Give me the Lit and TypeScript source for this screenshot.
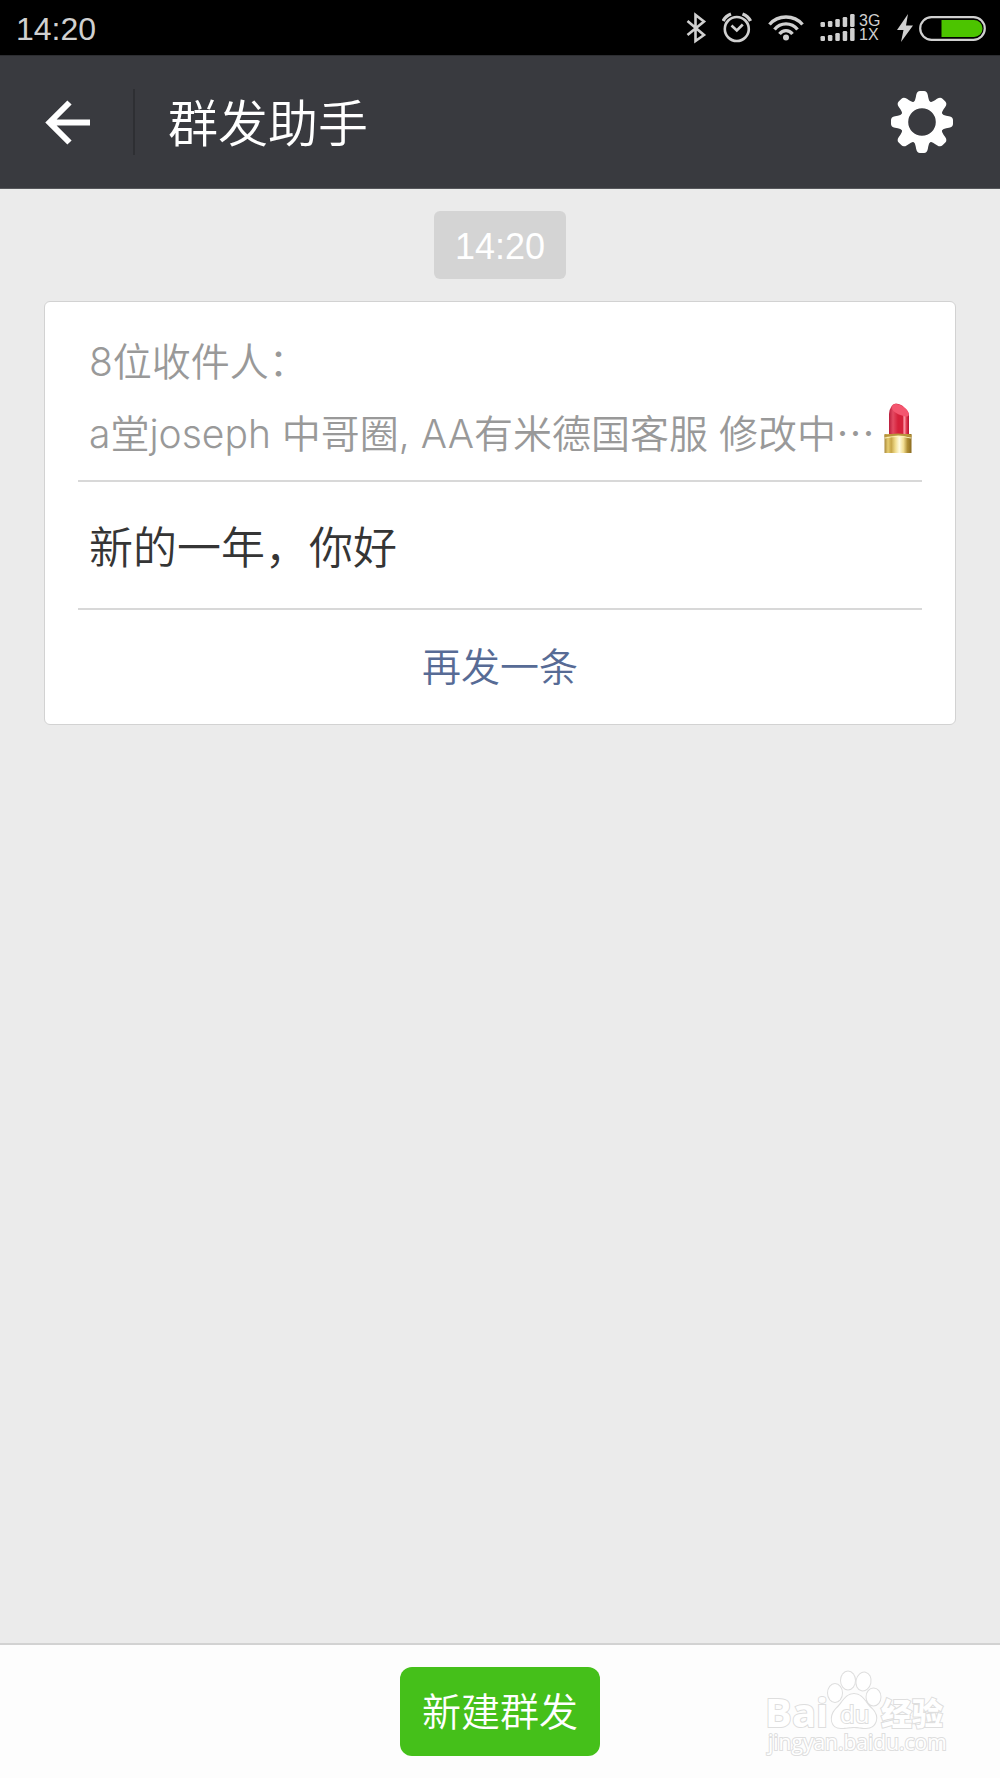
import { LitElement, html, css, svg } from "lit";
import { customElement, property } from "lit/decorators.js";

const sans = css`"Liberation Sans", "Noto Sans CJK SC", sans-serif`;
const mixed = css`Inter, "Noto Sans CJK SC", sans-serif`;

@customElement("status-bar")
class StatusBar extends LitElement {
  @property() time = "";

  static styles = css`
    :host {
      display: flex;
      align-items: center;
      justify-content: space-between;
      height: 55px;
      padding: 0 13px 0 16px;
      background: #000;
      color: #d0d0d0;
      font-family: ${sans};
    }
    .time {
      font-size: 32px;
      line-height: 36px;
      padding-top: 2px;
    }
    .icons,
    .cell,
    .power {
      display: flex;
      align-items: center;
    }
    .icons {
      gap: 14px;
    }
    .cell {
      gap: 3px;
    }
    .power {
      gap: 4px;
    }
    .network {
      display: flex;
      flex-direction: column;
      min-width: 23px;
      font-size: 16px;
      line-height: 14px;
    }
    svg {
      display: block;
      flex: none;
    }
  `;

  render() {
    const bars = [5, 6, 8, 10, 13];
    return html`
      <span class="time">${this.time}</span>
      <div class="icons">
        <svg width="22" height="32" viewBox="0 0 22 32" fill="none" stroke="#d0d0d0" stroke-width="2.6" aria-label="Bluetooth">
          <path d="M1.500 9 L18 23 L9.500 29 V3 L18 9.500 L1.500 23" />
        </svg>
        <svg width="31" height="32" viewBox="0 0 31 32" fill="none" stroke="#d0d0d0" stroke-width="2.6" aria-label="Alarm">
          <circle cx="14.800" cy="17" r="12" />
          <path d="M9.500 13.500 L14.800 18.500 L20.800 12.500" />
          <path d="M1.200 9 Q3.500 4 9 2 M28.500 9 Q26 4 20.500 2" stroke-width="3.4" />
        </svg>
        <svg width="38" height="32" viewBox="0 0 38 32" fill="none" stroke="#d0d0d0" stroke-width="3.4" aria-label="Wi-Fi">
          <path d="M2.500 12.500 C11 2.500 27 2.500 35.500 12.500" />
          <path d="M7.500 17.500 C13.500 10 24.500 10 30.500 17.500" />
          <path d="M12.500 22 C16 17.500 22 17.500 25.500 22" />
          <circle cx="19" cy="25.500" r="3" fill="#d0d0d0" stroke="none" />
        </svg>
        <div class="cell">
          <svg width="37" height="32" viewBox="0 0 37 32" fill="#d0d0d0" aria-label="Signal">
            ${[15, 29].map((base) =>
              bars.map(
                (h, i) => svg`<rect x=${1.5 + i * 7.4} y=${base - h} width="4.500" height=${h} rx="1.300" />`
              )
            )}
          </svg>
          <div class="network"><span>3G</span><span>1X</span></div>
        </div>
        <div class="power">
          <svg width="18" height="32" viewBox="0 0 18 32" fill="#d0d0d0" aria-label="Charging">
            <path d="M12 2 L1 18 H7.500 L5 30 L17 13.500 H10 Z" />
          </svg>
          <svg width="69" height="32" viewBox="0 0 69 32" aria-label="Battery">
            <rect x="2.200" y="5.200" width="64.600" height="22.600" rx="11.300" fill="none" stroke="#d0d0d0" stroke-width="2.200" />
            <path d="M23.500 8 H56 A8.500 8.500 0 0 1 56 25 H23.500 Z" fill="#4cc400" />
          </svg>
        </div>
      </div>
    `;
  }
}

@customElement("title-bar")
class TitleBar extends LitElement {
  @property() heading = "";

  static styles = css`
    :host {
      display: flex;
      align-items: center;
      height: 134px;
      padding: 0 40px 0 38px;
      box-sizing: border-box;
      background: #393a3f;
      border-bottom: 1px solid #56575b;
      border-top: 1px solid #2c2d31;
      color: #fff;
      font-family: ${sans};
    }
    button {
      display: block;
      padding: 0;
      border: 0;
      background: none;
      color: inherit;
      cursor: pointer;
    }
    svg {
      display: block;
    }
    .divider {
      width: 2px;
      height: 66px;
      margin: 0 33px 0 37px;
      background: #2e2f33;
    }
    h1 {
      flex: 1;
      margin: 0;
      padding-top: 5px;
      font-size: 50px;
      line-height: 60px;
      font-weight: 350;
    }
  `;

  render() {
    return html`
      <button aria-label="返回">
        <svg width="58" height="52" viewBox="0 0 58 52" fill="none" stroke="currentColor" stroke-width="6">
          <path d="M52 26.500 H11 M31.500 6.500 L11.500 26.500 L31.500 46.500" />
        </svg>
      </button>
      <div class="divider"></div>
      <h1>${this.heading}</h1>
      <button aria-label="设置">
        <svg width="76" height="76" viewBox="-38 -38 76 76">
          <circle r="17.800" fill="none" stroke="currentColor" stroke-width="8" />
          ${[0, 45, 90, 135, 180, 225, 270, 315].map(
            (a) => svg`<path transform="rotate(${a})" fill="currentColor"
              d="M-10 -18 C-7 -20 -6.500 -23 -5.800 -27 Q-5 -31 -2 -31 H2 Q5 -31 5.800 -27 C6.500 -23 7 -20 10 -18 Z" />`
          )}
        </svg>
      </button>
    `;
  }
}

@customElement("lipstick-icon")
class LipstickIcon extends LitElement {
  static styles = css`
    :host {
      display: block;
      flex: none;
    }
    svg {
      display: block;
    }
  `;

  render() {
    return html`
      <svg width="28" height="50" viewBox="0 0 28 50" role="img" aria-label="💄">
        <defs>
          <linearGradient id="gold">
            <stop offset="0" stop-color="#a8883a" />
            <stop offset="0.130" stop-color="#e6cd72" />
            <stop offset="0.250" stop-color="#c6a548" />
            <stop offset="0.400" stop-color="#f0dc8c" />
            <stop offset="0.550" stop-color="#fffbe0" />
            <stop offset="0.700" stop-color="#f3df94" />
            <stop offset="0.850" stop-color="#b08f35" />
            <stop offset="1" stop-color="#8b6b20" />
          </linearGradient>
          <linearGradient id="red">
            <stop offset="0" stop-color="#b91d3c" />
            <stop offset="0.200" stop-color="#e34a62" />
            <stop offset="0.450" stop-color="#d5203a" />
            <stop offset="0.680" stop-color="#d5203a" />
            <stop offset="0.760" stop-color="#ff9cab" />
            <stop offset="0.880" stop-color="#e0354e" />
            <stop offset="1" stop-color="#b3122f" />
          </linearGradient>
        </defs>
        <path d="M5 32 V11 Q6 1 12 0.500 C18 1 25 7 25 13 V32 Z" fill="url(#red)" />
        <path d="M8.500 3 C11 -1 18 2 22 6 C26 10 26 14 21 13.500 C14 12 6 8 8.500 3 Z" fill="#f4566f" />
        <rect x="0.500" y="31" width="27" height="19" fill="url(#gold)" />
        <path d="M0.500 32 Q14 29 27.500 32 V34 Q14 31 0.500 34 Z" fill="#b8953c" />
        <path d="M1 35 Q14 32 27 35" fill="none" stroke="#fff4bd" stroke-width="1.200" />
      </svg>
    `;
  }
}

@customElement("broadcast-card")
class BroadcastCard extends LitElement {
  @property() count = "";
  @property() recipients = "";
  @property() message = "";

  static styles = css`
    :host {
      display: block;
      padding: 0 33px;
      background: #fff;
      border: 1px solid #d2d2d2;
      border-radius: 6px;
      font-family: ${mixed};
      font-weight: 350;
    }
    .recipients {
      padding: 24px 10px 10px 11px;
      color: #999;
      font-size: 39px;
      line-height: 72px;
    }
    .recipients p,
    .message {
      margin: 0;
    }
    .names {
      display: flex;
      align-items: center;
      justify-content: space-between;
      white-space: nowrap;
    }
    .dots {
      font-family: "Noto Sans CJK SC", sans-serif;
      line-height: 1;
    }
    lipstick-icon {
      margin-bottom: 12px;
    }
    .message {
      padding: 34px 11px 28px;
      border: solid #d8d8d8;
      border-width: 2px 0;
      color: #353535;
      font-size: 44px;
      line-height: 64px;
    }
    button {
      display: block;
      width: 100%;
      padding: 0;
      border: 0;
      background: none;
      color: #576b95;
      font-family: inherit;
      font-weight: inherit;
      font-size: 39px;
      line-height: 114px;
      cursor: pointer;
    }
  `;

  render() {
    return html`
      <div class="recipients">
        <p>${this.count}位收件人：</p>
        <p class="names">
          <span>${this.recipients}<span class="dots">…</span></span>
          <lipstick-icon></lipstick-icon>
        </p>
      </div>
      <p class="message">${this.message}</p>
      <button>再发一条</button>
    `;
  }
}

@customElement("baidu-mark")
class BaiduMark extends LitElement {
  static styles = css`
    :host {
      display: block;
    }
    svg {
      display: block;
    }
    .shape {
      fill: #fff;
      stroke: #dedede;
      stroke-width: 2px;
      paint-order: stroke;
    }
    .latin {
      font: 700 40px "Open Sans", sans-serif;
    }
    .pad {
      font: 400 24px "Open Sans", sans-serif;
    }
    .han {
      font: 900 31px "Noto Sans CJK SC", sans-serif;
    }
    .site {
      font: 400 21px "Open Sans", sans-serif;
    }
  `;

  render() {
    return html`
      <svg width="184" height="92" viewBox="0 0 184 92">
        <text class="shape latin" x="1" y="57">Bai</text>
        <ellipse class="shape" cx="71" cy="23" rx="7" ry="9" />
        <ellipse class="shape" cx="84" cy="10.500" rx="7" ry="9" />
        <ellipse class="shape" cx="99.500" cy="11.500" rx="7" ry="9" transform="rotate(12 99.500 11.500)" />
        <ellipse class="shape" cx="109.500" cy="27" rx="7" ry="8.500" />
        <path class="shape" d="M90 24 C99 24 101 33 108 39 C116 47 112 58 102 58 C96 58 95 57 90 57 C85 57 83 58 77 58 C67 58 65 47 72 39 C79 33 81 24 90 24 Z" />
        <text class="shape pad" x="76" y="53">du</text>
        <text class="shape han" x="117" y="55">经验</text>
        <text class="shape site" x="4" y="80">jingyan.baidu.com</text>
      </svg>
    `;
  }
}

@customElement("app-root")
class AppRoot extends LitElement {
  static styles = css`
    :host {
      display: flex;
      flex-direction: column;
      min-height: 100vh;
      background: #ebebeb;
      font-family: ${sans};
    }
    main {
      flex: 1;
      display: flex;
      flex-direction: column;
      gap: 22px;
      padding: 22px 44px;
    }
    time {
      align-self: center;
      padding: 4px 21px 0;
      border-radius: 6px;
      background: #d4d4d4;
      color: #fff;
      font-size: 36px;
      line-height: 64px;
    }
    footer {
      position: relative;
      display: flex;
      justify-content: center;
      padding: 22px;
      border-top: 2px solid #d2d2d2;
      background: #fdfdfd;
    }
    .create {
      padding: 3px 22px 0;
      border: 0;
      border-radius: 12px;
      background: #45c01a;
      color: #fff;
      font-family: inherit;
      font-weight: 350;
      font-size: 39px;
      line-height: 86px;
      cursor: pointer;
    }
    baidu-mark {
      position: absolute;
      right: 52px;
      bottom: 16px;
    }
  `;

  render() {
    return html`
      <status-bar time="14:20"></status-bar>
      <title-bar heading="群发助手"></title-bar>
      <main>
        <time>14:20</time>
        <broadcast-card
          count="8"
          recipients="a堂joseph 中哥圈, AA有米德国客服 修改中"
          message="新的一年，你好"
        ></broadcast-card>
      </main>
      <footer>
        <button class="create">新建群发</button>
        <baidu-mark></baidu-mark>
      </footer>
    `;
  }
}
